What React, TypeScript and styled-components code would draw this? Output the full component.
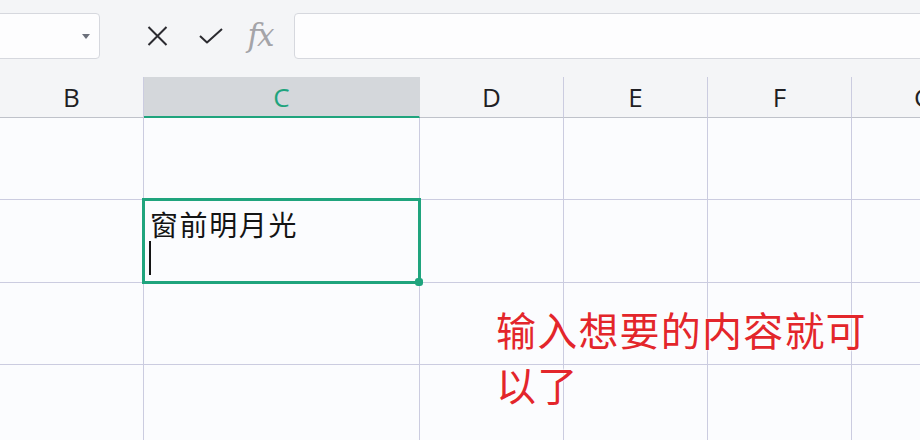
import React from 'react';
import styled, { createGlobalStyle } from 'styled-components';

// --- 기본 상수 ---
const COLUMNS = [
  { key: 'B', width: 144 },
  { key: 'C', width: 276 },
  { key: 'D', width: 144 },
  { key: 'E', width: 144 },
  { key: 'F', width: 144 },
  { key: 'G', width: 144 },
];
const ROW_HEIGHTS = [82, 83, 82, 90];
const ACTIVE = { col: 'C', row: 1 };

const GREEN = '#1fa47d';
const GRID = '#cbcce0';

const GlobalStyle = createGlobalStyle`
  html, body {
    margin: 0;
    padding: 0;
    background: #fbfcfe;
  }
  * { box-sizing: border-box; }
`;

const Page = styled.div`
  position: relative;
  width: 920px;
  height: 440px;
  overflow: hidden;
  background: #fbfcfe;
  font-family: 'Open Sans', 'Noto Sans CJK SC', sans-serif;
`;

// --- 상단 수식 입력줄 ---
const Toolbar = styled.div`
  height: 77px;
  display: flex;
  align-items: flex-start;
  padding-top: 13px;
  background: #f4f5f7;
`;

const NameBox = styled.div`
  position: relative;
  width: 105px;
  height: 46px;
  margin-left: -5px;
  background: #fdfdfe;
  border: 1px solid #d6d8de;
  border-radius: 4px;
`;

const Caret = styled.span`
  position: absolute;
  right: 9px;
  top: 20px;
  width: 0;
  height: 0;
  border-left: 4px solid transparent;
  border-right: 4px solid transparent;
  border-top: 5px solid #6c707b;
`;

const IconGroup = styled.div`
  display: flex;
  align-items: center;
  height: 46px;
  margin-left: 47px;
`;

const IconSlot = styled.span<{ $w: number; $gap?: number }>`
  display: flex;
  align-items: center;
  justify-content: center;
  width: ${({ $w }) => $w}px;
  margin-right: ${({ $gap }) => $gap ?? 0}px;
`;

const Fx = styled.span`
  font-family: 'DejaVu Serif', 'Liberation Serif', serif;
  font-style: italic;
  font-weight: 300;
  font-size: 31px;
  color: #a4a4a8;
  letter-spacing: -2px;
  line-height: 1;
  margin-top: -1px;
`;

const FormulaInput = styled.div`
  flex: 1;
  height: 46px;
  margin-left: 20px;
  margin-right: -6px;
  background: #fdfdfe;
  border: 1px solid #d6d8de;
  border-radius: 4px;
`;

// --- 시트 ---
const Grid = styled.div`
  display: grid;
  grid-template-columns: ${COLUMNS.map((c) => `${c.width}px`).join(' ')};
`;

const HeaderCell = styled.div<{ $selected?: boolean }>`
  height: 41px;
  display: flex;
  align-items: center;
  justify-content: center;
  font-size: 26px;
  color: ${({ $selected }) => ($selected ? GREEN : '#1f1f24')};
  background: ${({ $selected }) => ($selected ? '#d4d7db' : '#f4f5f7')};
  border-right: 1px solid ${({ $selected }) => ($selected ? '#d4d7db' : GRID)};
  border-bottom: ${({ $selected }) => ($selected ? `2px solid ${GREEN}` : '1px solid #bfc2ca')};
  padding-bottom: ${({ $selected }) => ($selected ? 0 : 1)}px;
`;

const Cell = styled.div<{ $h: number }>`
  position: relative;
  height: ${({ $h }) => $h}px;
  background: #fbfcfe;
  border-right: 1px solid ${GRID};
  border-bottom: 1px solid ${GRID};
`;

const ActiveFrame = styled.div`
  position: absolute;
  left: -2px;
  top: -2px;
  right: -2px;
  bottom: -2px;
  border: 3px solid ${GREEN};
  padding: 6px 0 0 5px;
  z-index: 2;
`;

const FillHandle = styled.span`
  position: absolute;
  right: -5px;
  bottom: -5px;
  width: 8px;
  height: 8px;
  border-radius: 3px;
  background: ${GREEN};
`;

const CellText = styled.div`
  font-family: 'Noto Sans CJK SC', sans-serif;
  font-size: 28px;
  line-height: 34px;
  color: #141414;
  letter-spacing: 1.6px;
`;

const TextCaret = styled.div`
  width: 2px;
  height: 34px;
  margin-left: -1px;
  background: #141414;
`;

const Callout = styled.div`
  position: absolute;
  left: 496px;
  top: 302px;
  width: 380px;
  font-family: 'Noto Sans CJK SC', sans-serif;
  font-size: 40px;
  line-height: 55px;
  letter-spacing: 1.2px;
  color: #e3262b;
  text-shadow: 0 0 2px #fff, 0 0 3px #fff;
  z-index: 3;
`;

const XIcon = () => (
  <svg width="21" height="20" viewBox="0 0 21 20">
    <path d="M1.5 1 L19.5 19 M19.5 1 L1.5 19" stroke="#2b2b30" strokeWidth="2" fill="none" />
  </svg>
);

const CheckIcon = () => (
  <svg width="24" height="16" viewBox="0 0 24 16">
    <path d="M1 8 L8 14.5 L23 1" stroke="#2b2b30" strokeWidth="2" fill="none" strokeLinejoin="round" />
  </svg>
);

const App = () => {
  return (
    <>
      <GlobalStyle />
      <Page>
        <Toolbar>
          <NameBox>
            <Caret />
          </NameBox>
          <IconGroup>
            <IconSlot $w={21} $gap={31}>
              <XIcon />
            </IconSlot>
            <IconSlot $w={24} $gap={23}>
              <CheckIcon />
            </IconSlot>
            <IconSlot $w={28}>
              <Fx>fx</Fx>
            </IconSlot>
          </IconGroup>
          <FormulaInput />
        </Toolbar>

        <Grid>
          {COLUMNS.map((c) => (
            <HeaderCell key={c.key} $selected={c.key === ACTIVE.col}>
              {c.key}
            </HeaderCell>
          ))}
          {ROW_HEIGHTS.map((h, r) =>
            COLUMNS.map((c) => (
              <Cell key={`${c.key}${r}`} $h={h}>
                {c.key === ACTIVE.col && r === ACTIVE.row && (
                  <ActiveFrame>
                    <CellText>窗前明月光</CellText>
                    <TextCaret />
                    <FillHandle />
                  </ActiveFrame>
                )}
              </Cell>
            ))
          )}
        </Grid>

        <Callout>输入想要的内容就可以了</Callout>
      </Page>
    </>
  );
};

export default App;
